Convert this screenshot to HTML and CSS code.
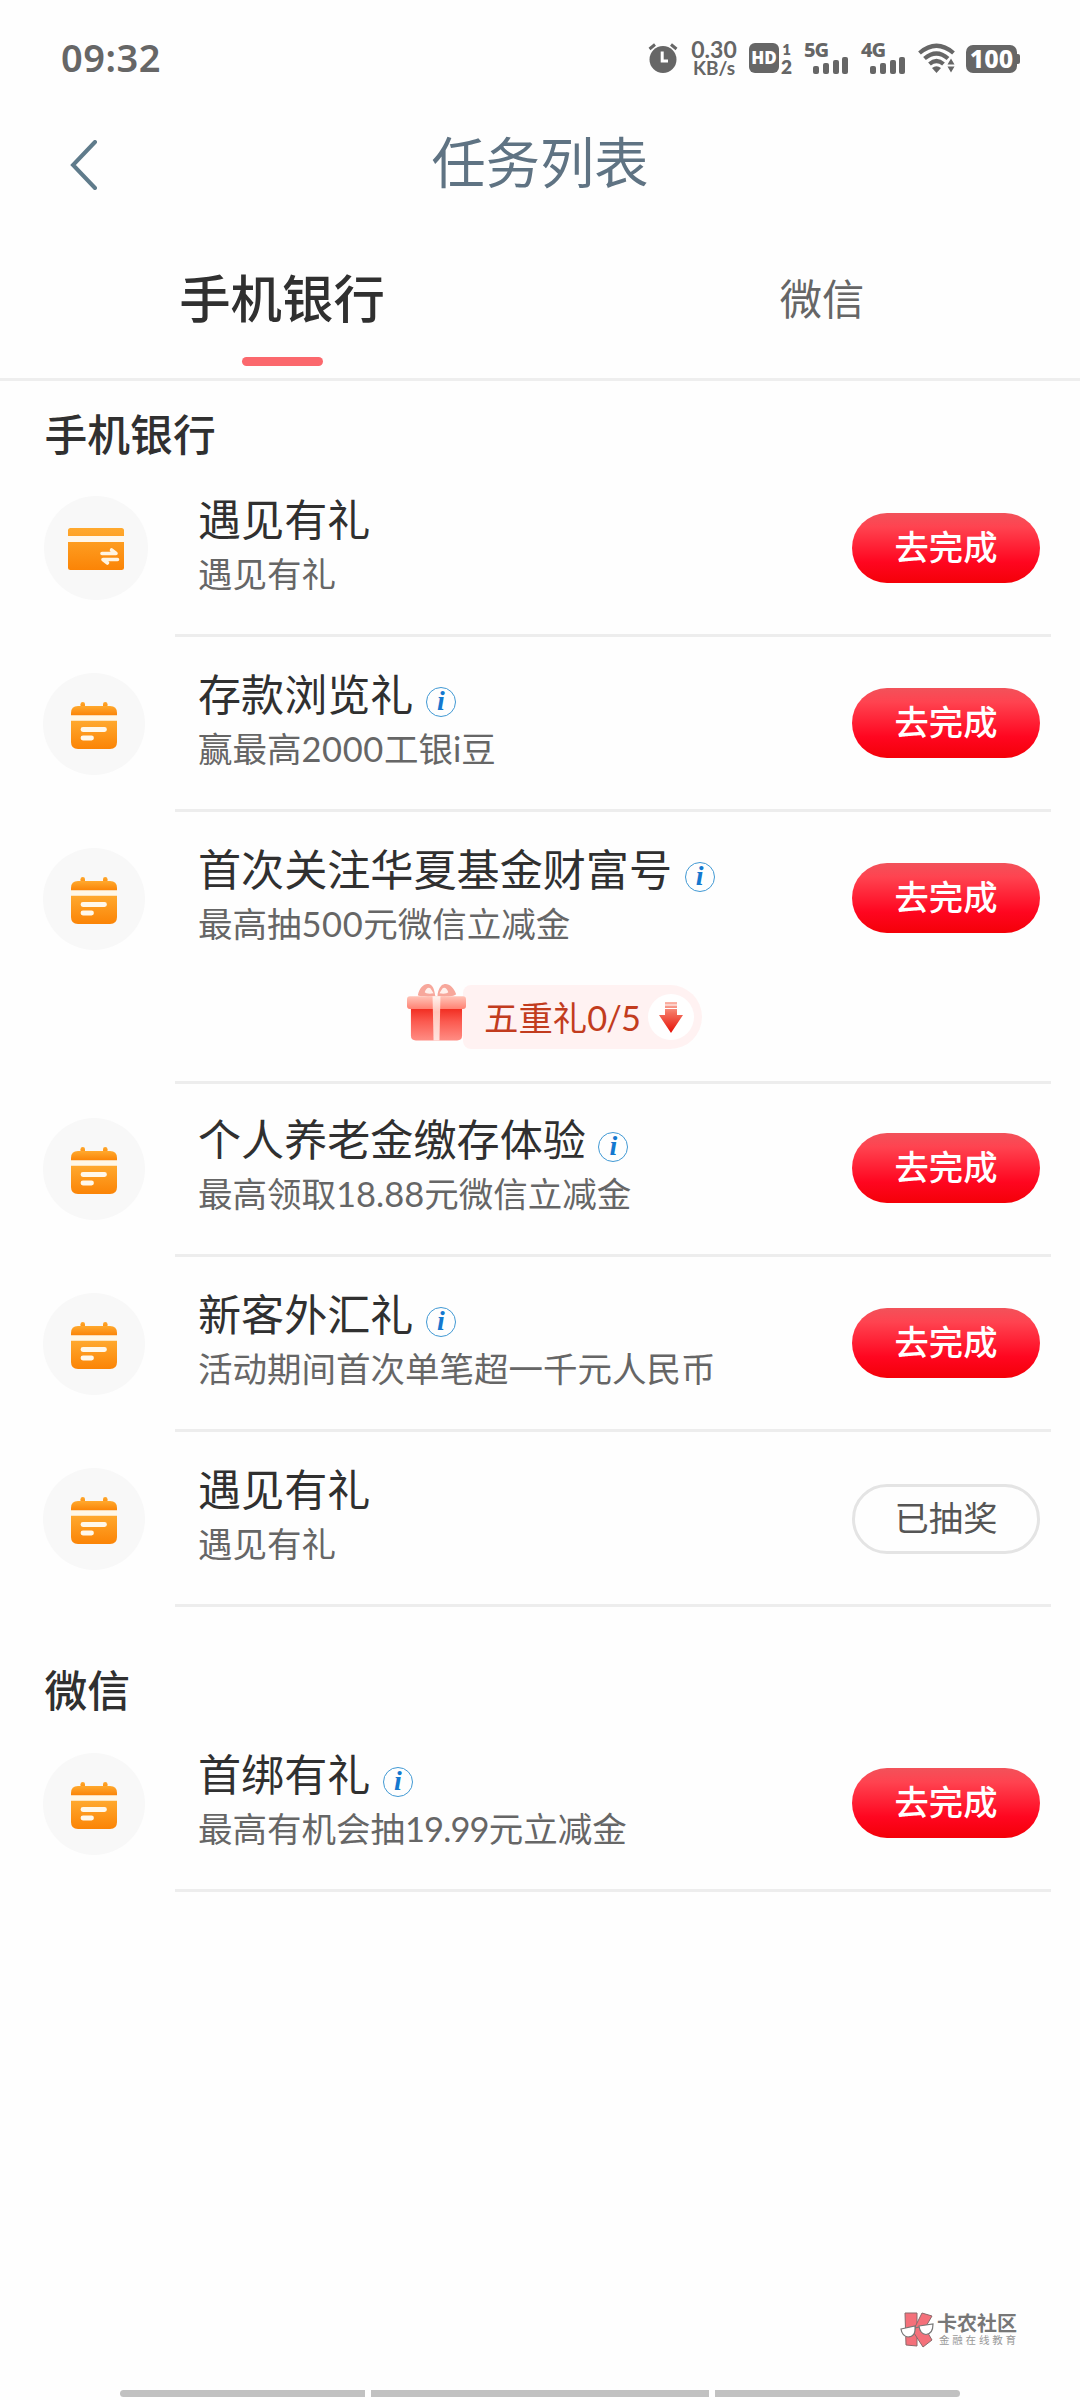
FILE: index.html
```html
<!DOCTYPE html>
<html lang="zh-CN">
<head>
<meta charset="utf-8">
<title>任务列表</title>
<link rel="stylesheet" href="styles.css">
</head>
<body>
<svg class="defs" aria-hidden="true">
  <defs>
    <linearGradient id="orange" x1="0" y1="0" x2="0" y2="1"><stop offset="0" stop-color="#ffa92e"/><stop offset="1" stop-color="#fb8406"/></linearGradient>
    <linearGradient id="giftBox" x1="0" y1="0" x2="0" y2="1"><stop offset="0" stop-color="#ef2418"/><stop offset=".45" stop-color="#fb5a50"/><stop offset="1" stop-color="#ff8d84"/></linearGradient>
    <linearGradient id="giftLid" x1="0" y1="0" x2="0" y2="1"><stop offset="0" stop-color="#ffc4b8"/><stop offset="1" stop-color="#ff8172"/></linearGradient>
    <linearGradient id="ribbon" x1="0" y1="0" x2="0" y2="1"><stop offset="0" stop-color="#fff3ee"/><stop offset=".35" stop-color="#ffc5bb"/><stop offset="1" stop-color="#ffe4df"/></linearGradient>
    <linearGradient id="arrow" x1="0" y1="0" x2="0" y2="1"><stop offset="0" stop-color="#fbb5a8"/><stop offset=".35" stop-color="#f4705e"/><stop offset="1" stop-color="#e60f05"/></linearGradient>
    <symbol id="calendar" viewBox="0 0 46 47">
      <g fill="url(#orange)">
        <rect x="9.500" y="0" width="4.500" height="8" rx="2.200"/>
        <rect x="32" y="0" width="4.500" height="8" rx="2.200"/>
        <path d="M0 13.500V11Q0 4 7 4H39Q46 4 46 11V13.500Z"/>
        <path d="M0 18.500H46V40Q46 47 39 47H7Q0 47 0 40Z"/>
      </g>
      <path d="M0 13.500H46V18.500H0Z" fill="#fff7e6"/>
      <path d="M12 27.500H33.500M12 36H20.500" stroke="#fff8ea" stroke-width="4.800" stroke-linecap="round"/>
    </symbol>
    <symbol id="bars" viewBox="0 0 35 17">
      <rect x="0" y="9" width="6" height="8" rx="2"/><rect x="10" y="6" width="6" height="11" rx="2"/><rect x="20" y="3" width="6" height="14" rx="2"/><rect x="29" y="0" width="6" height="17" rx="2"/>
    </symbol>
  </defs>
</svg>

<header class="status">
  <span class="clock">09:32</span>
  <div class="indicators">
    <svg class="alarm" viewBox="0 0 30 30"><circle cx="15" cy="16.500" r="13.500"/><path d="M1.500 6 7 1.500M28.500 6 23 1.500" fill="none" stroke="#666" stroke-width="3"/><path d="M14.200 8.500V18H20" fill="none" stroke="#fff" stroke-width="3"/></svg>
    <div class="speed"><span>0.30</span><span class="unit">KB/s</span></div>
    <span class="hd">HD</span>
    <div class="sims"><span>1</span><span class="two">2</span></div>
    <div class="signal"><span>5G</span><svg class="bars"><use href="#bars"/></svg></div>
    <div class="signal"><span>4G</span><svg class="bars"><use href="#bars"/></svg></div>
    <svg class="wifi" viewBox="0 0 38 30"><g fill="none" stroke="#666" stroke-width="4.200"><path d="M1.500 10Q18.500-4.500 35.500 10"/><path d="M6.500 15.500Q18.500 5.500 30 15.500"/><path d="M11.500 21Q18.500 15 25.500 21"/></g><path d="M14 25Q18.500 21.500 23 25L18.500 30Z"/><path d="M33 15.500 36.500 21.500H29.500ZM33 29.500 36.500 23.500H29.500Z"/></svg>
    <div class="battery"><span>100</span></div>
  </div>
</header>

<nav class="navbar">
  <svg class="back" viewBox="0 0 30 50"><path d="M26 2 4 25 26 48"/></svg>
  <h1>任务列表</h1>
</nav>

<div class="tabs">
  <div class="tab active">手机银行</div>
  <div class="tab">微信</div>
</div>

<main>
  <h2>手机银行</h2>
  <article class="task">
    <div class="icon large"><svg class="card" viewBox="0 0 56 42"><path d="M0 8V2.500Q0 0 2.500 0H53.500Q56 0 56 2.500V8ZM0 14H56V39.500Q56 42 53.500 42H2.500Q0 42 0 39.500Z" fill="url(#orange)"/><path d="M0 8H56V14H0Z" fill="#fff7ea"/><path d="M34 25.500H48L43.500 22M49.500 31.500H35L39.500 35" fill="none" stroke="#fff4e2" stroke-width="3.600" stroke-linecap="round" stroke-linejoin="round"/></svg></div>
    <div class="body"><h3>遇见有礼</h3><p>遇见有礼</p></div>
    <button class="go">去完成</button>
  </article>
  <article class="task">
    <div class="icon"><svg class="cal"><use href="#calendar"/></svg></div>
    <div class="body"><h3>存款浏览礼<span class="info">i</span></h3><p>赢最高<span class="wide">2000</span>工银i豆</p></div>
    <button class="go">去完成</button>
  </article>
  <article class="task extended">
    <div class="icon"><svg class="cal"><use href="#calendar"/></svg></div>
    <div class="body"><h3>首次关注华夏基金财富号<span class="info">i</span></h3><p>最高抽<span class="wide">500</span>元微信立减金</p></div>
    <button class="go">去完成</button>
    <div class="bonus">
      <svg class="gift" viewBox="0 0 60 60">
        <path d="M29 14C20 15 12 14 11 13C13 3 20-1 25 3C28 6 28 11 29 14ZM31 14C40 15 48 14 50 12C47 3 40-1 35 3C32 6 31 11 31 14Z" fill="#f7a79b"/>
        <path d="M27 11C22 12 19 11 18 10C19 6 22 4 24 6ZM33 11C38 12 41 11 42 10C41 6 38 4 36 6Z" fill="#fff0ec"/>
        <path d="M4 24H56V54Q56 59 51 59H9Q4 59 4 54Z" fill="url(#giftBox)"/>
        <rect x="0" y="14" width="60" height="13" rx="3" fill="url(#giftLid)"/>
        <path d="M26 14H34L33 59H27Z" fill="url(#ribbon)"/>
      </svg>
      <div class="pill"><span>五重礼<span class="narrow">0/5</span></span><span class="disc"><svg viewBox="0 0 24 31"><path d="M6 0H18V2.500H6ZM6 3.500H18V6H6ZM6 7H18V13H24L12 31 0 13H6Z" fill="url(#arrow)"/></svg></span></div>
    </div>
  </article>
  <article class="task tight">
    <div class="icon"><svg class="cal"><use href="#calendar"/></svg></div>
    <div class="body"><h3>个人养老金缴存体验<span class="info">i</span></h3><p>最高领取18.88元微信立减金</p></div>
    <button class="go">去完成</button>
  </article>
  <article class="task">
    <div class="icon"><svg class="cal"><use href="#calendar"/></svg></div>
    <div class="body"><h3>新客外汇礼<span class="info">i</span></h3><p>活动期间首次单笔超一千元人民币</p></div>
    <button class="go">去完成</button>
  </article>
  <article class="task">
    <div class="icon"><svg class="cal"><use href="#calendar"/></svg></div>
    <div class="body"><h3>遇见有礼</h3><p>遇见有礼</p></div>
    <button class="go done">已抽奖</button>
  </article>

  <h2 class="second">微信</h2>
  <article class="task">
    <div class="icon"><svg class="cal"><use href="#calendar"/></svg></div>
    <div class="body"><h3>首绑有礼<span class="info">i</span></h3><p>最高有机会抽<span class="narrow">19.99</span>元立减金</p></div>
    <button class="go">去完成</button>
  </article>
</main>

<footer>
  <div class="brand">
    <svg class="logo" viewBox="0 0 34 36"><g fill="#f4707a" stroke="#8a6a6c" stroke-width="1"><path d="M5 1H17V34L6 33Z"/><path d="M22 1 32 4 25 16 32 28 23 35 14 21 15 15Z"/></g><g fill="#fff" stroke="#777" stroke-width="1.200"><path d="M1 17 15 14Q16 25 8 25Q2 24 1 17Z"/><path d="M19 14 33 12Q33 22 26 22.500Q20 22 19 14ZM15 16 19 15"/></g></svg>
    <div class="brand-text"><strong>卡农社区</strong><small>金融在线教育</small></div>
  </div>
  <div class="gesture"><i></i><i class="mid"></i><i></i></div>
</footer>
</body>
</html>
```
FILE: styles.css
```css
* { box-sizing: border-box; margin: 0; padding: 0; }
body {
  width: 1080px; height: 2400px; overflow: hidden;
  display: flex; flex-direction: column;
  background: #fefefe; color: #303030;
  font-family: Lato, "Noto Sans CJK SC", sans-serif;
}
svg { display: block; flex: none; }
.defs { position: absolute; width: 0; height: 0; }

/* status bar */
.status { height: 116px; padding: 0 60px; display: flex; justify-content: space-between; color: #666; }
.clock { margin: 34px 0 0 1px; font: 600 38px/46px "Noto Sans", sans-serif; letter-spacing: .5px; }
.indicators { display: flex; height: 36px; margin-top: 40px; fill: #666; }
.alarm { width: 30px; height: 30px; margin: 3px 11px 0 0; }
.speed { width: 50px; display: flex; flex-direction: column; align-items: center; font: 700 23px/18px Lato, sans-serif; gap: 2px; }
.speed span { white-space: nowrap; }
.speed .unit { font-size: 19px; line-height: 16px; }
.hd { width: 30px; height: 30px; margin: 3px 0 0 10px; border-radius: 6px; background: #666; color: #fff; font: 900 17px/30px "Noto Sans", sans-serif; text-align: center; }
.sims { width: 11px; margin: 0 0 0 2px; display: flex; flex-direction: column; align-items: center; font: 800 15px/18px Lato, sans-serif; }
.sims .two { font-size: 19px; line-height: 17px; }
.signal { width: 45px; margin-left: 12px; font: 800 20px/17px "Noto Sans", sans-serif; letter-spacing: -1px; padding-top: 1px; display: flex; flex-direction: column; }
.bars { width: 35px; height: 17px; margin: -1px 0 0 9px; }
.wifi { width: 38px; height: 30px; margin: 3px 0 0 12px; }
.battery { width: 51px; height: 28px; margin: 5px 3px 0 10px; border-radius: 7px; background: #666; color: #fff; font: 800 25px/27px "Noto Sans", sans-serif; text-align: center; position: relative; }
.battery::after { content: ""; position: absolute; right: -3px; top: 9px; width: 3px; height: 10px; border-radius: 0 2px 2px 0; background: #666; }

/* title bar */
.navbar { height: 100px; display: grid; grid-template-columns: 108px 1fr 108px; align-items: center; padding-bottom: 6px; }
.back { width: 30px; height: 50px; margin-left: 69px; margin-top: 4px; fill: none; stroke: #5f7b8b; stroke-width: 4; stroke-linecap: round; }
.navbar h1 { font-weight: 400; font-size: 54.2px; line-height: 70px; color: #5f7383; text-align: center; }

/* tabs */
.tabs { height: 165px; border-bottom: 3px solid #eee; display: grid; grid-template-columns: 564px 516px; }
.tab { padding-top: 46px; font-size: 42.3px; line-height: 74px; text-align: center; color: #666; }
.tab.active { padding-top: 45px; font-size: 51.4px; font-weight: 500; color: #303030; }
.tab.active::after { content: ""; display: block; width: 81px; height: 9px; margin: 22px auto 0; border-radius: 5px; background: #fb686d; }

/* task groups */
h2 { padding: 27px 0 0 44.5px; height: 81px; font-size: 42.8px; line-height: 54px; font-weight: 500; }
h2.second { padding-top: 57px; height: 110px; }
.task { height: 175px; padding-top: 29px; display: grid; grid-template-columns: 44px 131px 23px 641px 1fr; grid-template-rows: auto 1fr; }
.task::after { content: ""; grid-column: 3 / 6; grid-row: 3; height: 3px; margin-right: 29px; background: #ededed; }
.task.extended { height: 272px; grid-template-rows: 110px 1fr; }
.task.tight { height: 173px; padding-top: 27px; }
.icon { grid-column: 2; grid-row: 1; width: 102px; height: 102px; margin: 7px 0 0 -1px; border-radius: 50%; background: #f8f8f8; display: flex; align-items: center; justify-content: center; }
.icon.large { width: 104px; height: 104px; margin: 5px 0 0 0; }
.cal { width: 46px; height: 47px; margin-top: 2px; }
.card { width: 56px; height: 42px; margin-top: 2px; }
.body { grid-column: 4; grid-row: 1; }
h3 { display: flex; align-items: center; font-size: 43.1px; line-height: 56px; font-weight: 400; }
.body p { margin-top: 3px; font-size: 34.5px; line-height: 48px; color: #666; }
.wide { letter-spacing: .6px; }
.narrow { letter-spacing: -.9px; }
.info { width: 30px; height: 30px; margin: 15px 0 0 12.5px; border: 1.5px solid #4199d4; border-radius: 50%; color: #1478cf; font: italic 700 28px/25px "Liberation Serif", serif; text-align: center; }
.go { grid-column: 5; grid-row: 1; width: 188px; height: 70px; margin: 22px 0 0 13px; border: 0; border-radius: 35px; background: linear-gradient(#f2525a, #ff4350 20%, #ff0620 70%, #f40008); color: #fff; font: 500 34.3px/66px Lato, "Noto Sans CJK SC", sans-serif; text-align: center; padding-bottom: 3px; }
.go.done { margin-top: 23px; background: #fefefe; border: 3px solid #e4e4e4; color: #555; font-weight: 400; line-height: 60px; }
.bonus { grid-column: 2 / 6; grid-row: 2; display: flex; margin: 31px 0 0 363px; }
.gift { width: 59px; height: 60px; margin-top: 0; z-index: 1; }
.pill { width: 239px; height: 64px; margin: 3px 0 0 -3px; padding-left: 21px; border-radius: 8px 32px 32px 8px; background: #fff2f2; display: flex; align-items: center; color: #c23c1e; font-size: 34.4px; line-height: 62px; }
.pill > span:first-child { padding-top: 2px; }
.disc { width: 46px; height: 46px; margin: 0 8px 0 auto; border-radius: 50%; background: #fff; display: flex; align-items: center; justify-content: center; }
.disc svg { width: 24px; height: 31px; }

/* bottom */
footer { flex: 1; display: flex; flex-direction: column; justify-content: flex-end; }
.brand { display: flex; align-self: flex-end; margin: 0 63px 42px 0; }
.logo { width: 34px; height: 36px; }
.brand-text { width: 83px; padding-left: 3px; color: #777; white-space: nowrap; }
.brand-text strong { display: block; font-size: 20px; line-height: 23px; font-weight: 700; }
.brand-text small { display: block; margin-left: 2px; font-size: 10.5px; line-height: 11px; letter-spacing: 2.8px; color: #999; }
.gesture { display: flex; gap: 6px; padding: 0 120px 3px; }
.gesture i { flex: 245; height: 7px; background: #c1c1c1; }
.gesture .mid { flex: 338; }
.gesture i:first-child { border-radius: 4px 0 0 4px; }
.gesture i:last-child { border-radius: 0 4px 4px 0; }
```
